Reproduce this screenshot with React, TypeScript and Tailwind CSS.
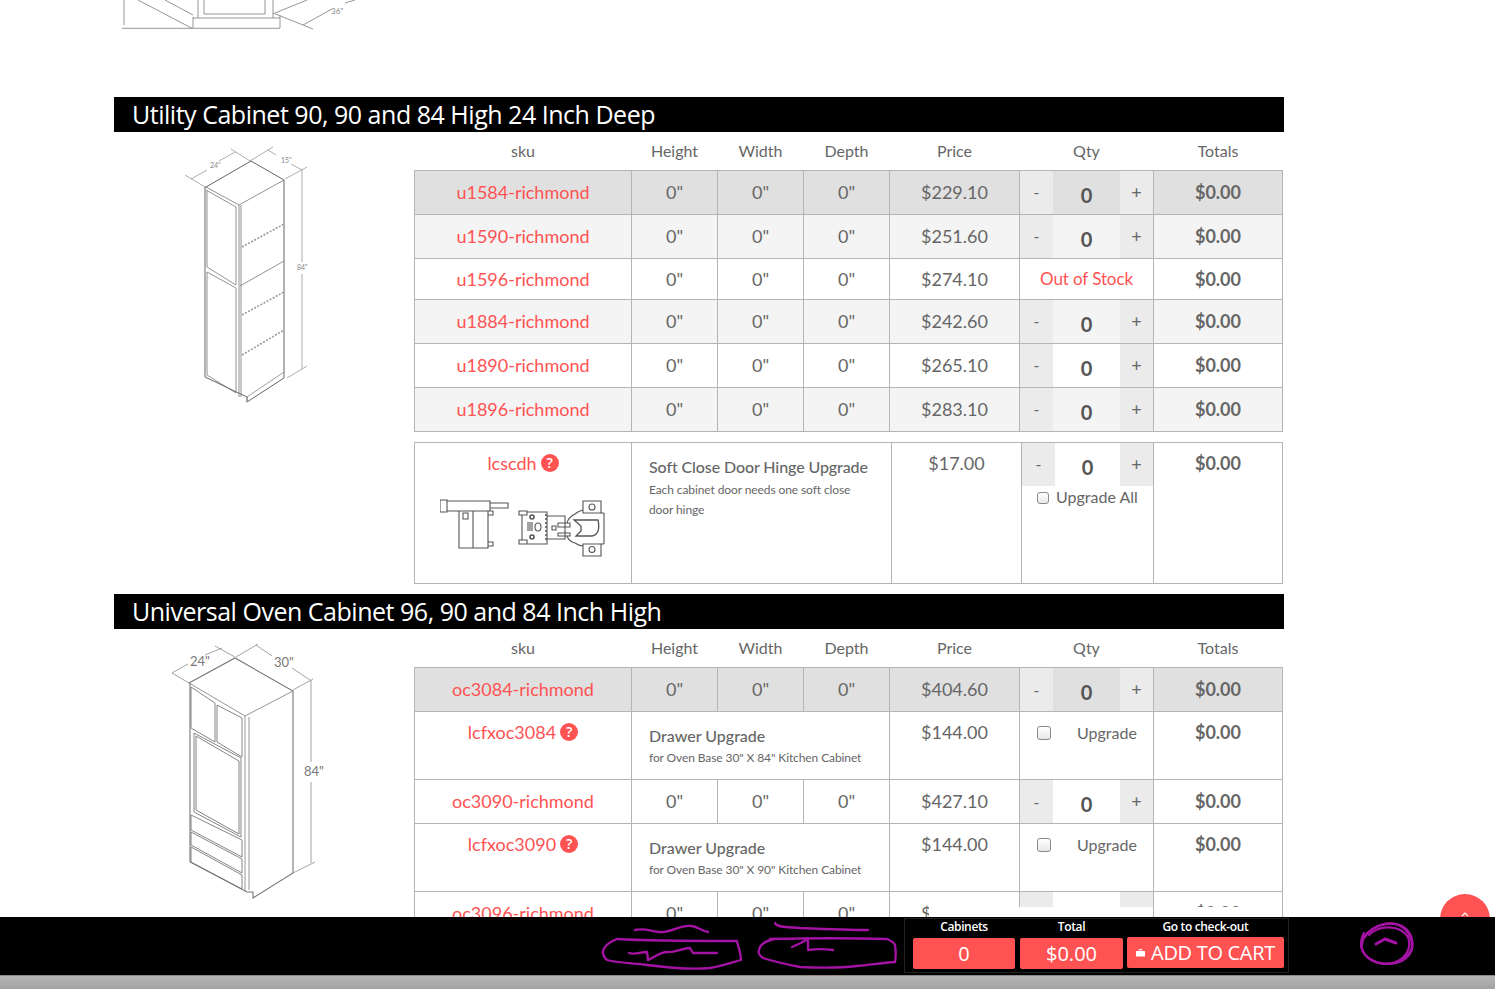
import React from "react";

type Row = {
  sku: string;
  price: string;
  bg?: string;
  stock?: boolean;
  h: string;
};

function HelpDot() {
  return (
    <span className="inline-flex items-center justify-center w-[18px] h-[18px] rounded-full bg-[#ff5252] text-white text-[14px] font-semibold leading-none align-[2px] ml-1 font-['Open_Sans',sans-serif]">
      ?
    </span>
  );
}

function QtyCell({ tall }: { tall?: boolean }) {
  return (
    <div className={`flex ${tall ? "h-[43px]" : "h-full"} items-stretch`}>
      <span className="w-[33px] bg-[#ebebeb] flex items-center justify-center text-[16px] text-[#666]">-</span>
      <span className="flex-1 flex items-center justify-center pt-[5px] text-[20px] font-bold text-[#555]">0</span>
      <span className="w-[33px] bg-[#ebebeb] flex items-center justify-center text-[18px] text-[#666]">+</span>
    </div>
  );
}

function ProductRow({ sku, price, bg = "bg-white", stock, h }: Row) {
  // the out of stock row is shorter and its text sits a pixel lower
  const cell = stock ? "border border-[#b5b5b5] text-center pt-[1px]" : "border border-[#b5b5b5] text-center";
  return (
    <tr className={`${bg} ${h}`}>
      <td className={`${cell} text-[#ff5252]`}>{sku}</td>
      <td className={cell}>0"</td>
      <td className={cell}>0"</td>
      <td className={cell}>0"</td>
      <td className={cell}>{price}</td>
      {stock ? (
        <td className={`${cell} text-[17px] tracking-[-0.1px] text-[#ff5252]`}>Out of Stock</td>
      ) : (
        <td className="border border-[#b5b5b5] p-0 h-px">
          <QtyCell />
        </td>
      )}
      <td className={`${cell} font-bold text-[#666]`}>$0.00</td>
    </tr>
  );
}

function DrawerRow({ sku, size }: { sku: string; size: string }) {
  return (
    <tr className="h-[68px] bg-white align-top">
      <td className="border border-[#b5b5b5] text-center pt-[7px] text-[#ff5252]">
        {sku}
        <HelpDot />
      </td>
      <td colSpan={3} className="border border-[#b5b5b5] pl-[17px] pt-[13px]">
        <div className="text-[16px] leading-[22px] font-medium text-[#666]">Drawer Upgrade</div>
        <div className="text-[12px] leading-[22px] tracking-[-0.1px] text-[#666]">for Oven Base 30" X {size}" Kitchen Cabinet</div>
      </td>
      <td className="border border-[#b5b5b5] text-center pt-[7px]">$144.00</td>
      <td className="border border-[#b5b5b5] pt-[13px] pl-[17px]">
        <div className="flex items-center gap-[26px] text-[16px] leading-[16px]">
          <span className="w-[14px] h-[14px] rounded-[3px] border border-[#8a8a8a] bg-gradient-to-b from-white to-[#e8e8e8]" />
          Upgrade
        </div>
      </td>
      <td className="border border-[#b5b5b5] text-center pt-[7px] font-bold">$0.00</td>
    </tr>
  );
}

function TableHead({ h = "h-[38px]" }: { h?: string }) {
  return (
    <>
      <colgroup>
        <col className="w-[217px]" />
        <col className="w-[86px]" />
        <col className="w-[86px]" />
        <col className="w-[86px]" />
        <col className="w-[130px]" />
        <col className="w-[134px]" />
        <col className="w-[129px]" />
      </colgroup>
      <thead>
        <tr className={`${h} text-[16px] text-[#666]`}>
          {["sku", "Height", "Width", "Depth", "Price", "Qty", "Totals"].map((t) => (
            <th key={t} className="font-normal text-center">
              {t}
            </th>
          ))}
        </tr>
      </thead>
    </>
  );
}

function TopDrawing() {
  return (
    <svg width="250" height="32" viewBox="114 0 250 32" fill="none" stroke="#8a8a8a" strokeWidth="0.9">
      <path d="M124 0V25M122 28.3H280M138 0 192 28.3M165 0 193 15M193 17V28M193 18H280M280 15V28M198 0V18M204 0V14H265V0M273 0V18M275 13 307 0M273 13 313 29M303 25 332 9M345 3 355 0" />
      <text x="331" y="14" stroke="none" fill="#888" fontFamily="Lato, sans-serif" fontSize="8">36"</text>
    </svg>
  );
}

function UtilityDrawing() {
  return (
    <svg width="140" height="262" viewBox="180 145 140 262" fill="none" stroke="#777" strokeWidth="0.8">
      {/* dimensions */}
      <path
        d="M185 175 205 187M191 179 207 170M219 161 235 152M231 149 250 161M250 161 273 147M268 150 276 155M291 164 302 170M285 179 307 167M302 170V262M302 274V369M287 378 307 366"
        stroke="#999"
      />
      {/* carcass */}
      <path d="M206 187 251 161 284 180V378L247 402V397L205 377V187Z" stroke="#666" strokeWidth="1" />
      <path d="M206 187 239 205 284 180M239 205V397M241 205V397M206 190 236 207V285M207 191V267L236 285M207 272 236 288V393M207 272V375L236 393M240 286 284 261" />
      <path d="M242 247 284 224M242 315 284 292M242 355 284 330" stroke="#999" strokeDasharray="2 1.5" strokeWidth="1.6" />
      <path d="M247 402V397L284 372" stroke="#888" />
      <text x="210" y="168" stroke="none" fill="#888" fontFamily="Lato, sans-serif" fontSize="7">24"</text>
      <text x="281" y="163" stroke="none" fill="#888" fontFamily="Lato, sans-serif" fontSize="7">15"</text>
      <text x="297" y="270" stroke="none" fill="#888" fontFamily="Lato, sans-serif" fontSize="7">84"</text>
    </svg>
  );
}

function OvenDrawing() {
  return (
    <svg width="170" height="262" viewBox="165 640 170 262" fill="none" stroke="#8a8a8a" strokeWidth="0.9">
      <path
        d="M172 673 189 683M172 673 188 664M205 655 222 648M215 646 235 657M236 657 258 644M256 645 272 656M292 668 310 680M293 690 313 679M311 680V762M311 782V863M293 873 315 862"
        stroke="#999"
      />
      <path d="M189 683 235 658 293 691V873L253 898V892L247 892 190 862V683Z" stroke="#777" strokeWidth="1.1" />
      <path d="M189 683 245 716 293 691M245 716V892M249 717V890" />
      <path d="M191 687V728L215 742V703ZM217 705V742L242 757V718ZM194 733V812L241 837V758ZM196 736V810L239 834V761Z" stroke="#777" />
      <path d="M191 815 242 840V857L191 830ZM191 832 242 859V873L191 845ZM191 847 242 875V889L191 862Z" stroke="#777" />
      <text x="190" y="666" stroke="none" fill="#777" fontFamily="Lato, sans-serif" fontSize="13">24"</text>
      <text x="274" y="667" stroke="none" fill="#777" fontFamily="Lato, sans-serif" fontSize="13">30"</text>
      <text x="304" y="776" stroke="none" fill="#777" fontFamily="Lato, sans-serif" fontSize="13">84"</text>
    </svg>
  );
}

function HingeDrawing() {
  return (
    <svg className="block" width="170" height="60" viewBox="0 0 170 60" fill="none" stroke="#555" strokeWidth="1.1">
      {/* soft close clip */}
      <path d="M0 1H7V13H0ZM7 2H50V12H7ZM50 4H68V9H50ZM19 12V49H48V12M33 12V49M23 14H28V20H23ZM48 12H53V16H48M48 43H53V47H48" />
      {/* hinge */}
      <path d="M79 12H87V16H79ZM79 41H87V45H79ZM82 16V41M87 13H107V45H87M107 17H125V40H107ZM112 27H116V31H112Z" />
      <path d="M118 24H130V28H118ZM118 34H130V37H118Z" />
      <path d="M143 2H161V14H143ZM143 45H161V57H143ZM164 14V45" />
      <path d="M135 15A18 18 0 0 1 143 11M161 14H164M161 45H164M135 44A18 18 0 0 0 143 47M127 24C128 20 131 17 135 15M127 37C128 40 131 43 135 44" />
      <path d="M134 21H150L158 21C160 30 158 36 152 37H136L141 32V27Z" strokeWidth="1.3" />
      <circle cx="152" cy="8" r="3" />
      <circle cx="152" cy="50.5" r="3" />
      <circle cx="92" cy="18" r="2" strokeWidth="1.6" />
      <circle cx="92" cy="38" r="2" strokeWidth="1.6" />
      <ellipse cx="98" cy="28" rx="3" ry="4" />
      <path d="M88 23V32M90 23V32M92 23V32" />
      <path d="M106 15V43" strokeDasharray="2 2" strokeWidth="1.5" />
    </svg>
  );
}

function MarkerOverlay() {
  return (
    <svg
      className="absolute inset-0 pointer-events-none"
      width="1495"
      height="58"
      viewBox="0 917 1495 58"
      fill="none"
      stroke="#a513a5"
      strokeWidth="2.3"
      strokeLinecap="round"
      strokeLinejoin="round"
    >
      <path d="M635 930C645 928 650 931 660 932C672 933 680 924 692 926C698 927 702 931 708 932" />
      <path d="M617 939C650 941 700 941 737 941C738 947 741 953 741 960C730 963 722 966 710 968C690 970 670 968 647 965C632 963 618 963 607 960C602 956 602 950 605 947C608 943 612 941 617 939Z" />
      <path d="M629 953C635 955 640 952 647 952L648 960C655 957 660 952 667 952C675 953 682 948 690 948L693 953C702 953 708 953 717 953" />
      <path d="M775 923C777 928 790 927 800 928C825 929 850 930 868 930" />
      <path d="M770 939C810 938 850 938 887 939C892 941 894 943 895 945C896 951 896 956 895 962C880 963 870 965 857 966C840 968 820 968 800 967C785 964 772 961 763 958C759 955 758 952 759 950C760 945 764 941 775 939" />
      <path d="M792 947C797 945 803 942 808 939L808 950C816 949 825 949 833 950" />
      <path d="M1365 937C1372 925 1390 920 1402 926C1412 932 1416 945 1409 955C1402 964 1385 967 1372 960C1362 955 1358 944 1364 933" />
      <path d="M1362 945C1362 933 1378 922 1395 924C1407 927 1413 938 1412 948C1408 960 1392 966 1378 963C1368 960 1362 953 1361 945" />
      <path d="M1369 935C1380 924 1400 925 1408 937C1412 948 1406 958 1396 962" />
      <path d="M1376 944 1385 939 1396 943" strokeWidth="3" />
    </svg>
  );
}

export default function App() {
  return (
    <div className="relative h-[989px] w-[1495px] overflow-hidden bg-white font-['Lato',sans-serif] text-[18px] text-[#666]">
      <div className="h-[917px] overflow-hidden">
        {/* end of the previous section's drawing */}
        <div className="h-[97px] pl-[114px]">
          <TopDrawing />
        </div>

        <section className="ml-[114px] w-[1170px]">
          <h2 className="h-[35px] bg-black pl-[18px] text-[25px] leading-[35px] tracking-[-0.48px] text-white font-['Open_Sans',sans-serif]">
            Utility Cabinet 90, 90 and 84 High 24 Inch Deep
          </h2>
          <div className="flex">
            <div className="w-[300px] shrink-0 pl-[66px] pt-[13px]">
              <UtilityDrawing />
            </div>
            <div className="w-[868px]">
              <table className="w-[868px] table-fixed border-collapse">
                <TableHead />
                <tbody>
                  <ProductRow sku="u1584-richmond" price="$229.10" bg="bg-[#e0e0e0]" h="h-[44px]" />
                  <ProductRow sku="u1590-richmond" price="$251.60" bg="bg-[#f4f4f4]" h="h-[44px]" />
                  <ProductRow sku="u1596-richmond" price="$274.10" stock h="h-[41px]" />
                  <ProductRow sku="u1884-richmond" price="$242.60" bg="bg-[#f4f4f4]" h="h-[44px]" />
                  <ProductRow sku="u1890-richmond" price="$265.10" h="h-[44px]" />
                  <ProductRow sku="u1896-richmond" price="$283.10" bg="bg-[#f4f4f4]" h="h-[44px]" />
                </tbody>
              </table>
              <table className="mt-[10px] w-[868px] table-fixed border-collapse">
                <colgroup>
                  <col className="w-[217px]" />
                  <col className="w-[260px]" />
                  <col className="w-[130px]" />
                  <col className="w-[132px]" />
                  <col className="w-[129px]" />
                </colgroup>
                <tbody>
                  <tr className="h-[141px] align-top">
                    <td className="border border-[#b5b5b5] pt-[7px] text-center text-[#ff5252]">
                      <div className="leading-[26px]">
                        lcscdh
                        <HelpDot />
                      </div>
                      <div className="mt-[23px] ml-[25px]">
                        <HingeDrawing />
                      </div>
                    </td>
                    <td className="border border-[#b5b5b5] pl-[17px] pt-[13px]">
                      <div className="text-[16px] leading-[22px] tracking-[-0.1px] font-medium">Soft Close Door Hinge Upgrade</div>
                      <div className="max-w-[210px] text-[12px] leading-[20px] tracking-[-0.1px] mt-[2px]">Each cabinet door needs one soft close door hinge</div>
                    </td>
                    <td className="border border-[#b5b5b5] pt-[7px] text-center">$17.00</td>
                    <td className="border border-[#b5b5b5] p-0">
                      <QtyCell tall />
                      <div className="mt-[1px] ml-[15px] flex items-center gap-[7px] text-[16px] leading-[20px]">
                        <span className="mt-[3px] w-[12px] h-[12px] rounded-[3px] border border-[#8a8a8a] bg-gradient-to-b from-white to-[#e8e8e8]" />
                        Upgrade All
                      </div>
                    </td>
                    <td className="border border-[#b5b5b5] pt-[7px] text-center font-bold">$0.00</td>
                  </tr>
                </tbody>
              </table>
            </div>
          </div>
        </section>

        <section className="ml-[114px] mt-[10px] w-[1170px]">
          <h2 className="h-[35px] bg-black pl-[18px] text-[25px] leading-[35px] tracking-[-0.48px] text-white font-['Open_Sans',sans-serif]">
            Universal Oven Cabinet 96, 90 and 84 Inch High
          </h2>
          <div className="flex">
            <div className="w-[300px] shrink-0 pl-[51px] pt-[11px]">
              <OvenDrawing />
            </div>
            <div className="w-[868px]">
              <table className="w-[868px] table-fixed border-collapse">
                <TableHead h="h-[39px]" />
                <tbody>
                  <ProductRow sku="oc3084-richmond" price="$404.60" bg="bg-[#e0e0e0]" h="h-[44px]" />
                  <DrawerRow sku="lcfxoc3084" size="84" />
                  <ProductRow sku="oc3090-richmond" price="$427.10" h="h-[44px]" />
                  <DrawerRow sku="lcfxoc3090" size="90" />
                  <ProductRow sku="oc3096-richmond" price="$449.60" h="h-[44px]" />
                </tbody>
              </table>
            </div>
          </div>
        </section>
      </div>

      {/* scroll to top */}
      <div className="absolute left-[1440px] top-[894px] flex h-[50px] w-[50px] justify-center rounded-full bg-[#ff5252] pt-[18px]">
        <svg width="8" height="5" viewBox="0 0 8 5" fill="none" stroke="white" strokeWidth="1.2">
          <path d="M1 4 4 1 7 4" />
        </svg>
      </div>

      {/* white strip sitting above the cart bar */}
      <div className="absolute left-[929px] top-[907px] h-[10px] w-[353px] bg-white">
        <div className="ml-[224px] h-full w-px bg-[#b5b5b5]" />
      </div>

      {/* cart bar */}
      <div className="absolute bottom-0 left-0 w-full">
        <div className="relative flex h-[58px] justify-end bg-black pr-[206px] pt-[1px] font-['Open_Sans',sans-serif] text-white">
          <MarkerOverlay />
          <div className="flex h-[55px] w-[385px] shrink-0 border border-[#222] pl-[8px] pr-[4px]">
            <div className="w-[102px] shrink-0 text-center">
              <div className="h-[19px] text-[12px] font-semibold leading-[15px] tracking-[-0.35px]">Cabinets</div>
              <div className="flex h-[31px] items-center justify-center rounded-[2px] bg-[#ff5252] text-[20px]">0</div>
            </div>
            <div className="ml-[5px] w-[103px] shrink-0 text-center">
              <div className="h-[19px] text-[12px] font-semibold leading-[15px] tracking-[-0.35px]">Total</div>
              <div className="flex h-[31px] items-center justify-center rounded-[2px] bg-[#ff5252] text-[20px]">$0.00</div>
            </div>
            <div className="ml-[4px] w-[157px] shrink-0 text-center">
              <div className="h-[18px] text-[12px] font-semibold leading-[15px] tracking-[-0.35px]">Go to check-out</div>
              <div className="flex h-[31px] items-center justify-center gap-[6px] rounded-[2px] bg-[#ff5252] text-[20px] tracking-[-0.3px]">
                <svg width="9" height="9" viewBox="0 0 9 9" fill="white">
                  <path d="M0 3H9V8.5H0ZM2.5 3C2.5 0 6.5 0 6.5 3H5.7C5.7 1.2 3.3 1.2 3.3 3Z" />
                </svg>
                ADD TO CART
              </div>
            </div>
          </div>
        </div>
        <div className="h-[14px] border-t border-[#8a8a8a] bg-gradient-to-b from-[#b5b5b5] to-[#a2a2a2]" />
      </div>
    </div>
  );
}
